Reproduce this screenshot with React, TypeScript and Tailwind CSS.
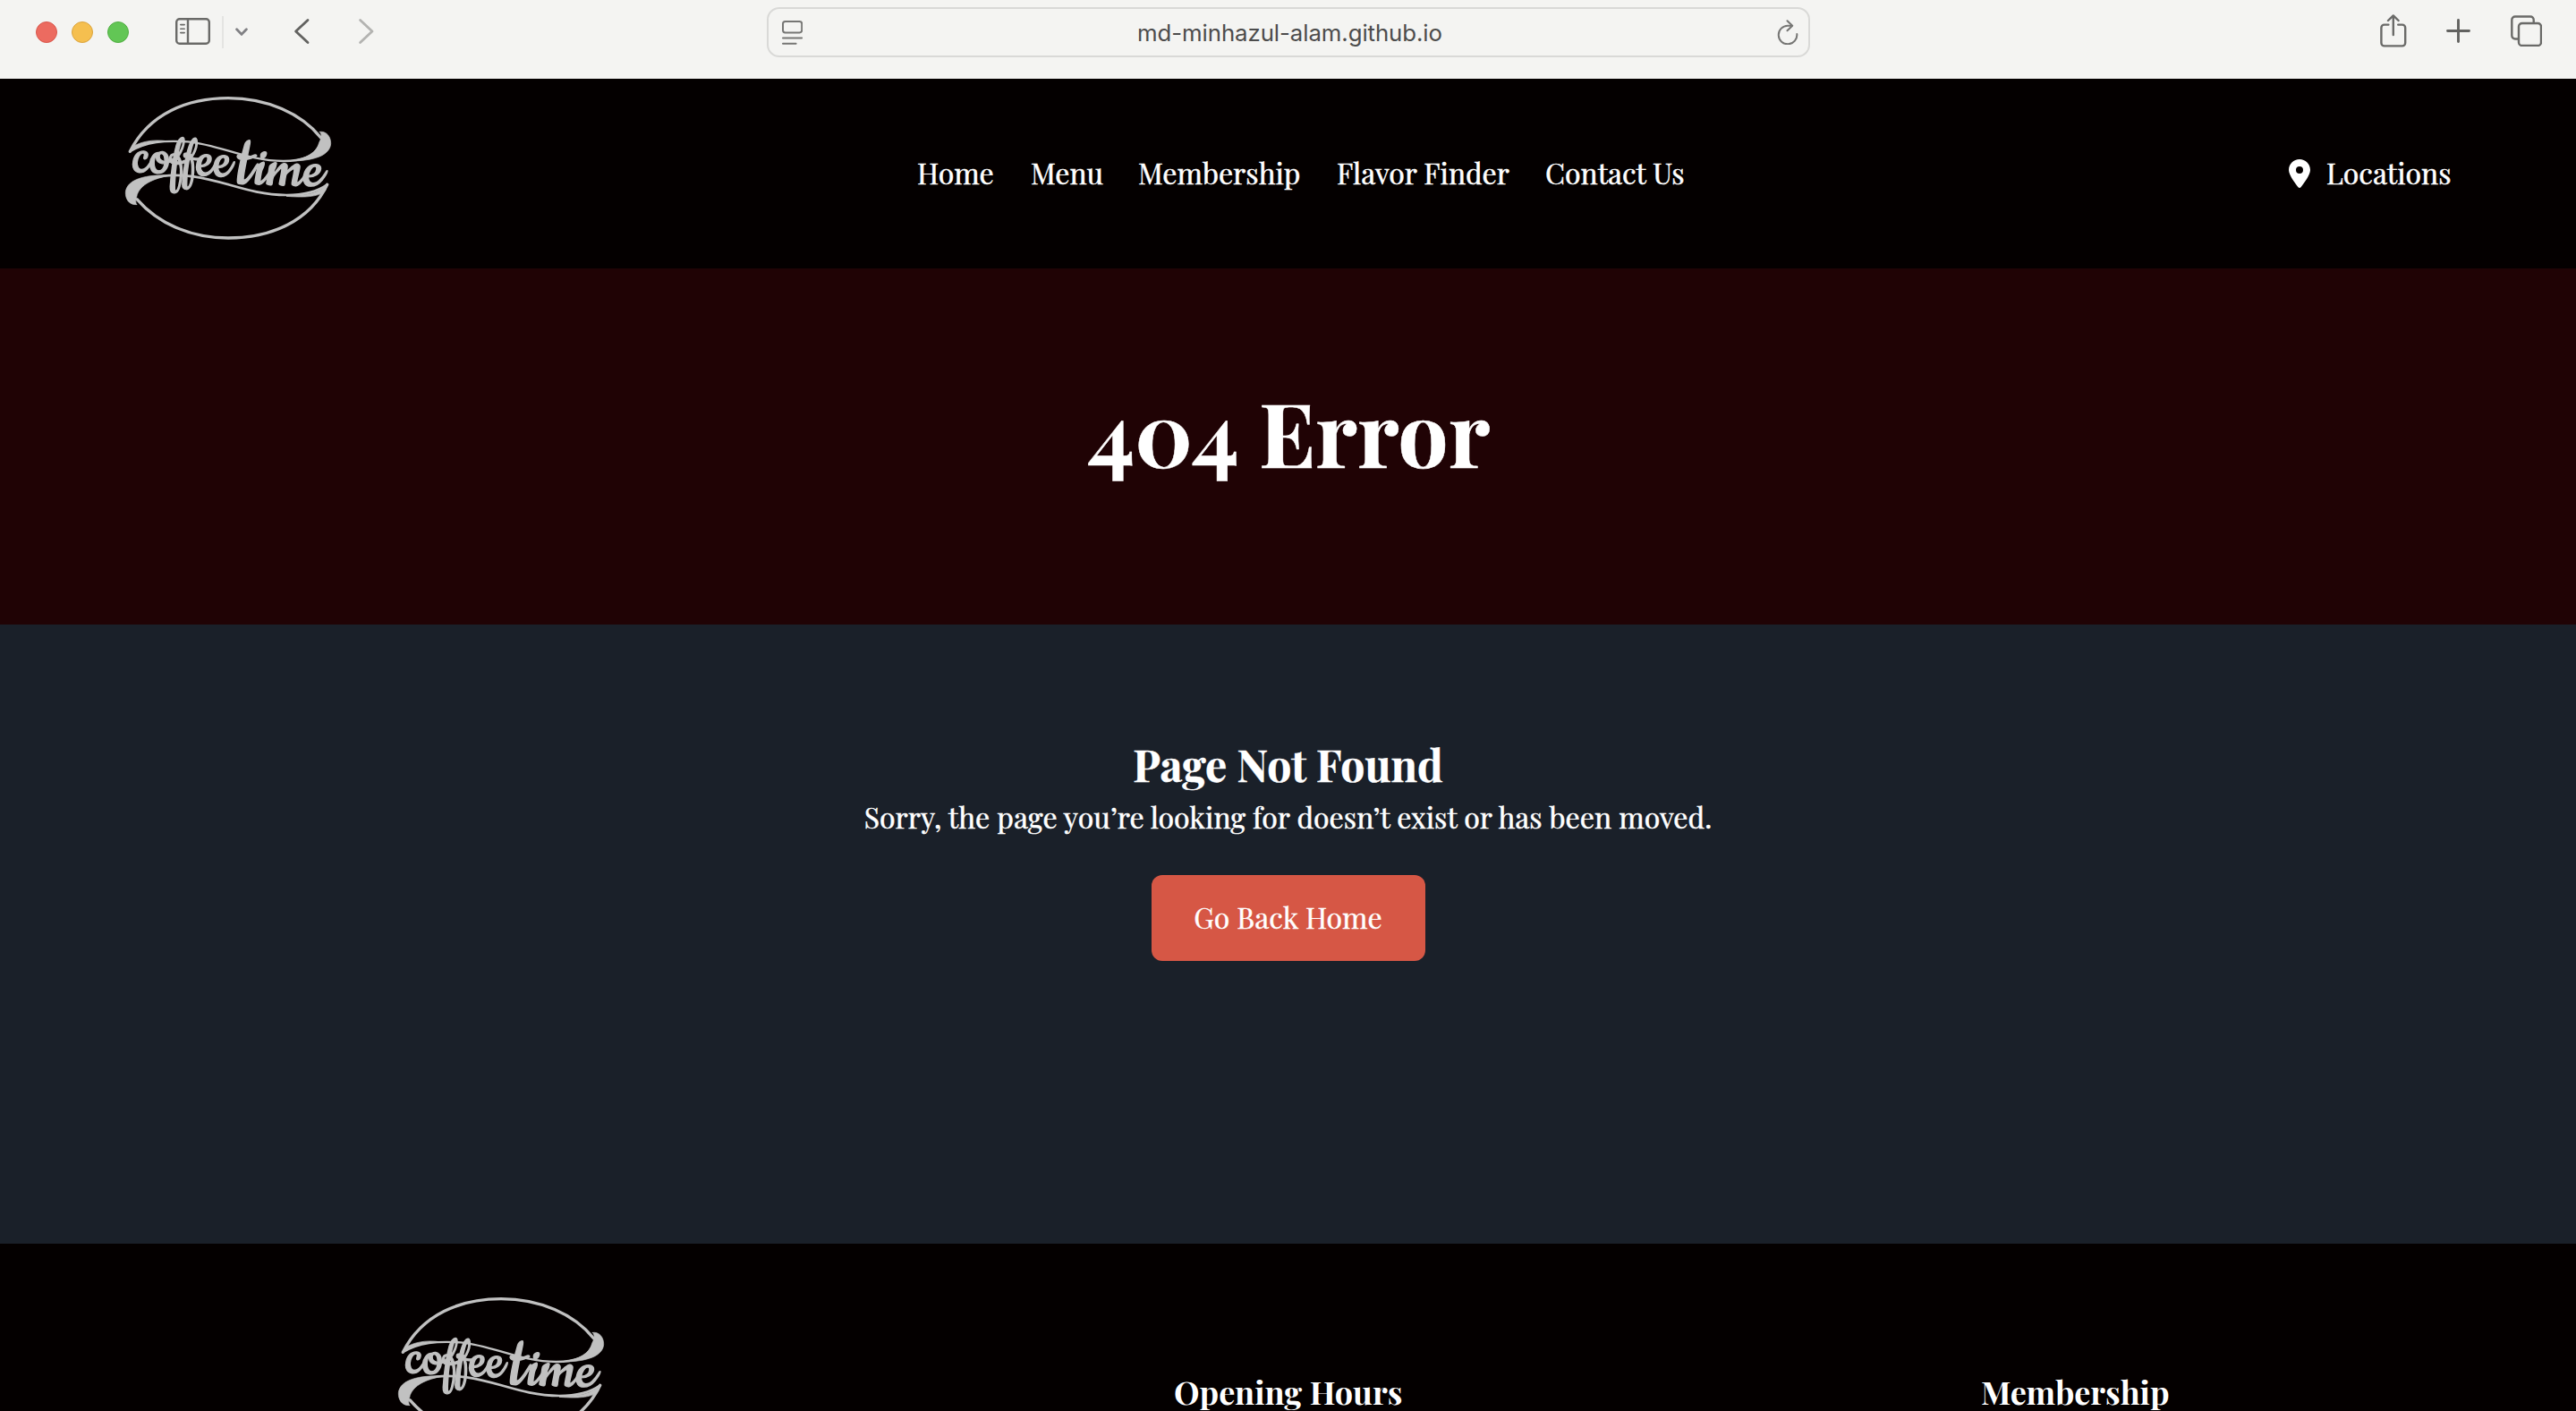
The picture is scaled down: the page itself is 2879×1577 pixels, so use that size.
import React from "react";
import { FaLocationDot } from "react-icons/fa6";

const serif = "font-['Playfair_Display','Liberation_Serif',serif]";

function Logo() {
  return (
    <svg viewBox="0 0 810 660" className="h-[220px] w-[270px] shrink-0" fill="none" stroke="#c1c1c1" strokeLinecap="round" strokeLinejoin="round">
      <path strokeWidth="10" d="M76 238 C140 110 270 59 405 59 C535 59 650 110 716 192" />
      <path strokeWidth="10" d="M99 398 C170 480 280 528 405 528 C550 528 680 470 737 349" />
      <path strokeWidth="7" d="M76 238 C130 205 190 200 270 205 C380 216 470 270 590 270 C650 270 690 258 722 215" />
      <path strokeWidth="8" d="M92 360 C150 310 230 315 290 322 C390 335 480 384 600 384 C660 384 705 372 737 349" />
      <path fill="#c1c1c1" strokeWidth="2" d="M712 172 C735 168 750 190 749 212 C746 250 695 270 610 270 C670 262 702 240 710 208 C716 196 722 184 712 172 Z" />
      <path fill="#c1c1c1" strokeWidth="2" d="M98 416 C72 418 60 396 61 374 C66 330 130 314 215 318 C150 328 112 350 100 382 C98 394 92 404 98 416 Z" />
      <path fill="#c1c1c1" strokeWidth="2" d="M76 240 C100 222 130 205 200 203 C150 196 110 206 84 222 Z" />
      <path fill="#c1c1c1" strokeWidth="2" d="M737 349 C712 374 680 386 600 388 C670 394 712 388 730 370 Z" />
      <g fill="#c1c1c1" stroke="#c1c1c1" strokeWidth="4" fontFamily="'Cookie', 'Dancing Script', 'Liberation Serif', cursive">
        <text fontSize="200" transform="translate(84 306) rotate(3)" textLength="330" lengthAdjust="spacingAndGlyphs">coffee</text>
        <text transform="translate(430 345) rotate(2) skewX(-5)">
          <tspan fontSize="265">t</tspan>
          <tspan fontSize="205" x="64" textLength="226" lengthAdjust="spacingAndGlyphs">ime</tspan>
        </text>
      </g>
    </svg>
  );
}

function Toolbar() {
  return (
    <div className="flex h-[88px] w-full items-start bg-[#f4f4f2]">
      <div className="ml-10 mt-6 flex gap-4">
        <span className="size-6 rounded-full border border-[#d8574c] bg-[#ec6b60]" />
        <span className="size-6 rounded-full border border-[#dba43e] bg-[#f5bf4f]" />
        <span className="size-6 rounded-full border border-[#51ae43] bg-[#62c655]" />
      </div>
      <svg className="ml-[52px] mt-5 h-[30px] w-[39px]" viewBox="0 0 39 30" fill="none" stroke="#6a6a68" strokeWidth="2.4" strokeLinecap="round">
        <rect x="1.2" y="1.2" width="36.6" height="27.6" rx="3.5" />
        <path d="M14 1v28" />
        <path strokeWidth="1.6" d="M5.8 7.6h4.4M5.8 12.2h4.4M5.8 16.6h4.4" />
      </svg>
      <span className="ml-[13px] mt-[18px] h-9 w-0.5 bg-[#e4e4e2]" />
      <svg className="ml-[13px] mt-[31px] h-[10px] w-[14px]" viewBox="0 0 14 10" fill="none" stroke="#808084" strokeWidth="2.8" strokeLinecap="round" strokeLinejoin="round">
        <path d="M1.6 1.8 7 7.4l5.4-5.6" />
      </svg>
      <svg className="ml-[51px] mt-5 h-[30px] w-[18px]" viewBox="0 0 18 30" fill="none" stroke="#626260" strokeWidth="2.8" strokeLinecap="round" strokeLinejoin="round">
        <path d="M16 2.4 2.6 15 16 27.6" />
      </svg>
      <svg className="ml-[54px] mt-5 h-[30px] w-[18px]" viewBox="0 0 18 30" fill="none" stroke="#b3b3b1" strokeWidth="2.8" strokeLinecap="round" strokeLinejoin="round">
        <path d="M2.6 2.4 16 15 2.6 27.6" />
      </svg>
      <div className="ml-[439px] mt-2 flex h-14 w-[1166px] items-center justify-between rounded-[14px] border-2 border-[#d9d9d7] pl-[14px] pr-[11px]">
        <svg className="h-[28px] w-6" viewBox="0 0 24 28" fill="none" stroke="#767674" strokeWidth="2" strokeLinecap="round">
          <rect x="2" y="2" width="21.2" height="12.4" rx="2.6" />
          <path d="M2 20.4h21.2M2 26.8h14.6" />
        </svg>
        <span className="mt-px font-[Inter,sans-serif] text-[25.8px] leading-none tracking-[-0.08px] text-[#4c4c4c]">md-minhazul-alam.github.io</span>
        <svg className="h-7 w-6" viewBox="0 0 24 28" fill="none" stroke="#767674" strokeWidth="2" strokeLinecap="round" strokeLinejoin="round">
          <path d="M16.6 6.7H12A10.3 10.3 0 1 0 22.3 16" />
          <path d="M11.5 1.2l5.7 5.5-5.7 5.6" />
        </svg>
      </div>
      <svg className="ml-[637px] mt-4 h-[37px] w-[30px]" viewBox="0 0 30 37" fill="none" stroke="#6a6a68" strokeWidth="2.4" strokeLinecap="round" strokeLinejoin="round">
        <path d="M9.4 11.6H4.8a3.4 3.4 0 0 0-3.4 3.4v17a3.4 3.4 0 0 0 3.4 3.4h20a3.4 3.4 0 0 0 3.4-3.4V15a3.4 3.4 0 0 0-3.4-3.4h-4.6" />
        <path d="M14.8 23V1.6M9 7l5.8-5.6L20.6 7" />
      </svg>
      <svg className="ml-[44px] mt-[21px] h-[27px] w-[27px]" viewBox="0 0 27 27" fill="none" stroke="#626260" strokeWidth="2.9" strokeLinecap="round">
        <path d="M13.5 1.5v24M1.5 13.5h24" />
      </svg>
      <svg className="ml-[45px] mt-[17px] h-[35px] w-[35px]" viewBox="0 0 35 35" fill="none" stroke="#6a6a68" strokeWidth="2.4">
        <path d="M8.5 26.5H5a3.7 3.7 0 0 1-3.7-3.7V5.2A3.7 3.7 0 0 1 5 1.5h17a3.7 3.7 0 0 1 3.7 3.7v3.3" />
        <rect x="9" y="9" width="25" height="25" rx="3.8" />
      </svg>
    </div>
  );
}

const links = [
  { label: "Home", cls: "w-[87px]" },
  { label: "Menu", cls: "w-[80px]" },
  { label: "Membership", cls: "w-[182px]" },
  { label: "Flavor Finder", cls: "w-[193px]" },
  { label: "Contact Us", cls: "w-[155px]" },
];

export default function App() {
  return (
    <div className={`flex h-[1577px] w-[2879px] flex-col overflow-hidden bg-[#040000] text-white ${serif}`}>
      <Toolbar />
      <header className="flex h-[212px] shrink-0 bg-[#040000] pl-[120px]">
        <div className="mt-0.5">
          <Logo />
        </div>
        <nav className="ml-[635px] mt-[85px] flex gap-10 text-[32px] leading-10 [-webkit-text-stroke:0.5px_white]">
          {links.map((l) => (
            <a key={l.label} className={`whitespace-nowrap ${l.cls}`}>{l.label}</a>
          ))}
        </nav>
        <a className="ml-[672px] mt-[85px] flex h-10 items-center text-[32px] leading-10">
          <FaLocationDot className="mt-0.5 size-8" />
          <span className="ml-[14px] [-webkit-text-stroke:0.5px_white]">Locations</span>
        </a>
      </header>
      <section className="flex h-[398px] shrink-0 justify-center bg-[#200305] pt-[117px]">
        <h1 className="ml-0.5 h-[130px] text-[100px] font-bold leading-[130px] [-webkit-text-stroke:0.5px_white]">404 Error</h1>
      </section>
      <main className="flex h-[692px] shrink-0 flex-col items-center bg-[#1a2029] pt-[124px]">
        <h2 className="h-16 text-[48px] font-bold leading-[64px] [-webkit-text-stroke:0.5px_white]">Page Not Found</h2>
        <p className="mt-[3px] text-[32px] leading-[48px] tracking-[0.03px] [-webkit-text-stroke:0.5px_white]">Sorry, the page you’re looking for doesn’t exist or has been moved.</p>
        <button className="mt-[41px] h-24 w-[306px] rounded-xl bg-[#d65745] pb-0.5 text-[32px] [-webkit-text-stroke:0.4px_white]">Go Back Home</button>
      </main>
      <footer className="flex h-[187px] shrink-0 bg-[#040000] pl-[425px]">
        <div className="mt-[42px] h-[145px] w-[270px] overflow-hidden">
          <Logo />
        </div>
        <h3 className="ml-[617px] mt-[140px] w-[256px] whitespace-nowrap text-[36px] font-bold leading-[50px]">Opening Hours</h3>
        <h3 className="ml-[646px] mt-[140px] text-[36px] font-bold leading-[50px]">Membership</h3>
      </footer>
    </div>
  );
}
